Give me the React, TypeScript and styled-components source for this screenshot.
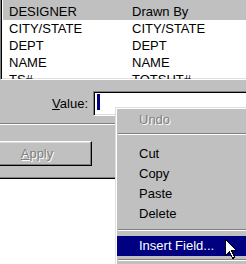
import React from "react";
import styled, { createGlobalStyle } from "styled-components";

const Global = createGlobalStyle`
  html, body { margin: 0; padding: 0; background: #c0c0c0; }
  body { font-family: "Liberation Sans", Arial, sans-serif; font-size: 13px; }
`;

const Screen = styled.div`
  position: relative;
  width: 246px;
  height: 264px;
  overflow: hidden;
  background: #c0c0c0;
  display: flex;
  flex-direction: column;
  color: #000;
`;

const ListBox = styled.div`
  box-sizing: border-box;
  height: 80px;
  flex: none;
  background: #fff;
  border-left: 1px solid #808080;
  border-bottom: 1px solid #fff;
  box-shadow: inset 1px 0 #000, inset 0 -1px #dfdfdf;
  padding-left: 2px;
  overflow: hidden;
`;

const ListRow = styled.div<{ $selected?: boolean }>`
  display: grid;
  grid-template-columns: 123px 1fr;
  height: 17px;
  line-height: 17px;
  padding-left: 6px;
  padding-top: ${(p) => (p.$selected ? "3px" : "0")};
  background: ${(p) => (p.$selected ? "#c0c0c0" : "transparent")};
  white-space: nowrap;
`;

const FieldRow = styled.div`
  display: flex;
  align-items: center;
  gap: 5px;
  margin-top: 11px;
  margin-right: -12px;
  height: 25px;
  flex: none;
`;

const Label = styled.label`
  width: 88px;
  text-align: right;
`;

const TextInput = styled.div`
  box-sizing: border-box;
  flex: 1;
  height: 25px;
  background: #fff;
  border-top: 1px solid #808080;
  border-left: 1px solid #808080;
  border-bottom: 1px solid #fff;
  border-right: 1px solid #fff;
  box-shadow: inset 1px 1px #000, inset -1px -1px #dfdfdf;
  padding: 2px 0 0 3px;
`;

const Caret = styled.div`
  width: 3px;
  height: 16px;
  background: #000080;
`;

const Etched = styled.div`
  flex: none;
  margin-top: 7px;
  height: 1px;
  border-top: 1px solid #808080;
  background: #fff;
`;

const Button = styled.div`
  box-sizing: border-box;
  flex: none;
  margin-top: 16px;
  margin-left: -18px;
  width: 110px;
  height: 25px;
  display: flex;
  align-items: center;
  justify-content: center;
  background: #c0c0c0;
  border-top: 1px solid #fff;
  border-left: 1px solid #fff;
  border-bottom: 1px solid #000;
  border-right: 1px solid #000;
  box-shadow: inset -1px -1px #808080, inset 1px 1px #dfdfdf;
  color: #808080;
  text-shadow: 1px 1px 0 #fff;
`;

const LowerPanel = styled.div`
  flex: 1;
  margin-top: 11px;
  background: #fff;
  border-top: 1px solid #808080;
  box-shadow: inset 0 1px #000;
`;

const Menu = styled.div`
  position: absolute;
  left: 115px;
  top: 107px;
  width: 150px;
  height: 180px;
  background: #c0c0c0;
  border-top: 1px solid #dfdfdf;
  border-left: 1px solid #dfdfdf;
  box-shadow: inset 1px 1px #fff;
  padding: 2px 0 0 1px;
  box-sizing: border-box;
`;

const MenuItem = styled.div<{ $disabled?: boolean; $active?: boolean }>`
  height: 20px;
  line-height: 20px;
  padding-left: 22px;
  white-space: nowrap;
  background: ${(p) => (p.$active ? "#000080" : "transparent")};
  color: ${(p) => (p.$active ? "#fff" : p.$disabled ? "#808080" : "#000")};
  text-shadow: ${(p) => (p.$disabled ? "1px 1px 0 #fff" : "none")};
`;

const Separator = styled.div<{ $top: number; $bottom: number }>`
  margin: ${(p) => p.$top}px 0 ${(p) => p.$bottom}px 1px;
  height: 1px;
  border-top: 1px solid #808080;
  background: #fff;
`;

const Pointer = styled.svg`
  position: absolute;
  left: 225px;
  top: 239px;
`;

const rows: [string, string][] = [
  ["DESIGNER", "Drawn By"],
  ["CITY/STATE", "CITY/STATE"],
  ["DEPT", "DEPT"],
  ["NAME", "NAME"],
  ["TS#", "TOTSHT#"],
];

export default function App() {
  return (
    <Screen>
      <Global />
      <ListBox>
        {rows.map(([a, b], i) => (
          <ListRow key={a} $selected={i === 0}>
            <span>{a}</span>
            <span>{b}</span>
          </ListRow>
        ))}
      </ListBox>
      <FieldRow>
        <Label>
          <u>V</u>alue:
        </Label>
        <TextInput>
          <Caret />
        </TextInput>
      </FieldRow>
      <Etched />
      <Button>
        <span>
          <u>A</u>pply
        </span>
      </Button>
      <LowerPanel />
      <Menu>
        <MenuItem $disabled>Undo</MenuItem>
        <Separator $top={3} $bottom={9} />
        <MenuItem>Cut</MenuItem>
        <MenuItem>Copy</MenuItem>
        <MenuItem>Paste</MenuItem>
        <MenuItem>Delete</MenuItem>
        <Separator $top={5} $bottom={5} />
        <MenuItem $active>Insert Field...</MenuItem>
        <Separator $top={3} $bottom={3} />
      </Menu>
      <Pointer width="13" height="21" viewBox="0 0 13 21">
        <path
          d="M0.5 0.5 L0.5 16.5 L4.5 12.5 L7.5 19.5 L9.5 18.5 L6.5 11.5 L11.5 11.5 Z"
          fill="#fff"
          stroke="#000"
          strokeWidth="1"
          shapeRendering="crispEdges"
        />
      </Pointer>
    </Screen>
  );
}
